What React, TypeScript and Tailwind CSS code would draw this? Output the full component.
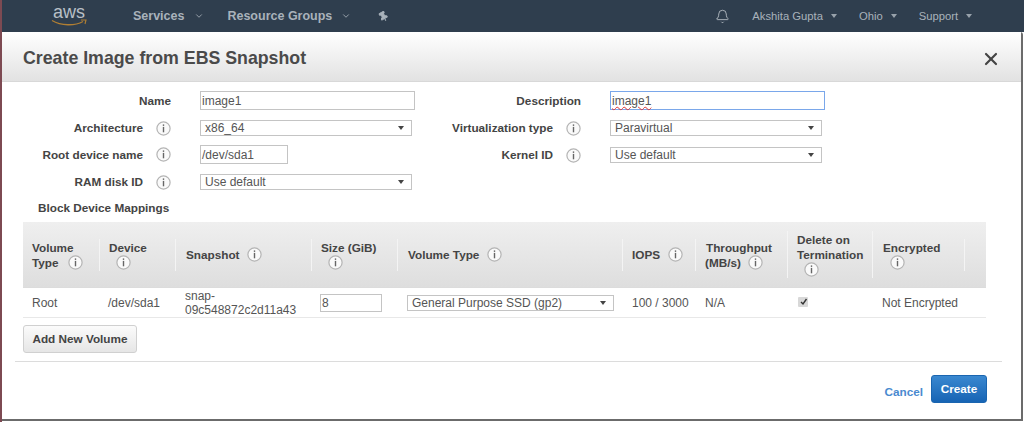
import { ChevronDown, Bell, X, Pin } from 'lucide-react'

const FONT = "font-['Liberation_Sans',Arial,sans-serif]"
const COLS = 'grid-cols-[77px_76px_136px_86px_225px_73px_92px_85px_92px_21px]'

function InfoIcon({ className = '' }: { className?: string }) {
  return (
    <svg viewBox="0 0 15 15" className={`h-[15px] w-[15px] shrink-0 ${className}`}>
      <circle cx="7.5" cy="7.5" r="6.6" fill="#fafafa" stroke="#b4b4b4" strokeWidth="1.2" />
      <rect x="6.8" y="3.4" width="1.4" height="1.5" fill="#666" />
      <rect x="6.8" y="5.9" width="1.4" height="5.4" fill="#666" />
    </svg>
  )
}

function Caret({ color = 'border-t-[#444]' }: { color?: string }) {
  return <span className={`h-0 w-0 border-x-[3px] border-t-[4px] border-x-transparent ${color}`} />
}

function SelectBox({ value, className = '' }: { value: string; className?: string }) {
  return (
    <div className={`flex h-[16px] items-center justify-between border border-[#c4c4c4] bg-white pl-1 pr-[7px] text-[12px] text-[#555] ${className}`}>
      <span>{value}</span>
      <Caret />
    </div>
  )
}

function TextBox({ value, className = '' }: { value: string; className?: string }) {
  return (
    <div className={`flex h-[19px] items-center border border-[#c4c4c4] bg-white pl-[1px] text-[12px] text-[#555] ${className}`}>
      {value}
    </div>
  )
}

function NavItem({ label, className = '' }: { label: string; className?: string }) {
  return (
    <div className={`flex items-center gap-[8px] text-[11.25px] text-[#a9b2bb] ${className}`}>
      <span>{label}</span>
      <Caret color="border-t-[#98a2ab]" />
    </div>
  )
}

function FormRow({ label, info = true, labelWidth, children, className = '' }: {
  label: string
  info?: boolean
  labelWidth: string
  children: React.ReactNode
  className?: string
}) {
  return (
    <div className={`flex items-center ${className}`}>
      <div className={`whitespace-nowrap text-right text-[11.75px] font-bold leading-[16px] text-[#444] ${labelWidth}`}>{label}</div>
      {info ? (
        <div className="flex h-[15px] w-[57px] pl-[13px]">
          <InfoIcon />
        </div>
      ) : (
        <div className="w-[29px]" />
      )}
      {children}
    </div>
  )
}

function HeadCell({ children, tall = false, last = false }: { children: React.ReactNode; tall?: boolean; last?: boolean }) {
  return (
    <div className={`flex flex-col justify-center px-[9px] text-[11.75px] font-bold leading-[15px] text-[#444] ${tall ? 'h-[47px]' : 'h-[32px]'} ${last ? '' : 'border-r border-[#f4f4f4]'}`}>
      {children}
    </div>
  )
}

export default function App() {
  return (
    <div className={`h-[422px] w-[1024px] overflow-hidden border-l-2 border-[#7d4a52] bg-white ${FONT}`}>
      {/* top nav */}
      <div className="flex h-[32px] items-center bg-[#2f3e4e] text-[#a9b2bb]">
        <div className="ml-[49px] flex w-[36px] flex-col items-center">
          <div className="-mt-[1px] text-[18px] leading-[14px] text-[#b9c0c7]">aws</div>
          <svg viewBox="0 0 36 8" className="h-[8px] w-[36px]">
            <path d="M1 1.5 C10 7 24 7 32 2.5" fill="none" stroke="#b17f33" strokeWidth="1.3" />
            <path d="M30 1 L35 1 L34 5" fill="none" stroke="#b17f33" strokeWidth="1.1" />
          </svg>
        </div>
        <div className="ml-[46px] flex items-center gap-[10px] text-[12.5px] font-bold">
          <span>Services</span>
          <ChevronDown size={10} strokeWidth={2} />
        </div>
        <div className="ml-[23px] flex items-center gap-[9px] text-[12.5px] font-bold">
          <span>Resource Groups</span>
          <ChevronDown size={10} strokeWidth={2} />
        </div>
        <Pin size={11} strokeWidth={2} fill="#a9b2bb" className="ml-[27px] rotate-[-30deg]" />
        <Bell size={15} strokeWidth={1.3} className="ml-[326px] text-[#c2c8ce]" />
        <NavItem label="Akshita Gupta" className="ml-[22px]" />
        <NavItem label="Ohio" className="ml-[22px]" />
        <NavItem label="Support" className="ml-[22px]" />
      </div>

      {/* dialog */}
      <div className="mr-[1px] h-[389px] rounded-t-[3px] border-b-2 border-r-2 border-[#6b6b6b] bg-white">
        <div className="flex h-[50px] items-center justify-between border-b border-[#d8d8d8] bg-gradient-to-b from-white to-[#e2e2e2] pl-[21px] pr-[20px] pt-[4px]">
          <h1 className="text-[17.75px] font-bold text-[#4a4a4a]">Create Image from EBS Snapshot</h1>
          <X size={20} strokeWidth={2.6} className="text-[#444]" />
        </div>

        <div className="flex pt-[9px]">
          {/* left column */}
          <div className="w-[449px] shrink-0">
            <FormRow label="Name" info={false} labelWidth="w-[169px]">
              <TextBox value="image1" className="w-[215px]" />
            </FormRow>
            <FormRow label="Architecture" labelWidth="w-[141px]" className="mt-[10px]">
              <SelectBox value="x86_64" className="w-[212px]" />
            </FormRow>
            <FormRow label="Root device name" labelWidth="w-[141px]" className="mt-[9px]">
              <TextBox value="/dev/sda1" className="w-[88px]" />
            </FormRow>
            <FormRow label="RAM disk ID" labelWidth="w-[141px]" className="mt-[10px]">
              <SelectBox value="Use default" className="w-[212px]" />
            </FormRow>
          </div>
          {/* right column */}
          <div className="flex-1">
            <FormRow label="Description" info={false} labelWidth="w-[130px]">
              <div className="flex h-[19px] w-[215px] items-center border border-[#7aa7ea] bg-white pl-[1px] text-[12px] text-[#555] underline decoration-[#d33] decoration-wavy decoration-1">
                image1
              </div>
            </FormRow>
            <FormRow label="Virtualization type" labelWidth="w-[102px]" className="mt-[10px]">
              <SelectBox value="Paravirtual" className="w-[212px]" />
            </FormRow>
            <FormRow label="Kernel ID" labelWidth="w-[102px]" className="mt-[11px]">
              <SelectBox value="Use default" className="w-[212px]" />
            </FormRow>
          </div>
        </div>

        <div className="ml-[36px] mt-[11px] text-[11.75px] font-bold leading-[14px] text-[#444]">Block Device Mappings</div>

        {/* mapping table */}
        <div className="ml-[21px] mt-[7px] w-[963px]">
          <div className={`grid h-[66px] ${COLS} items-center border-b border-[#dcdcdc] bg-gradient-to-b from-[#efefef] to-[#dedede]`}>
            <HeadCell>
              <span>Volume</span>
              <span className="flex items-center gap-[9px]">Type <InfoIcon /></span>
            </HeadCell>
            <HeadCell>
              <span>Device</span>
              <InfoIcon className="ml-[7px]" />
            </HeadCell>
            <HeadCell>
              <span className="flex items-center gap-[7px] pl-[1px]">Snapshot <InfoIcon /></span>
            </HeadCell>
            <HeadCell>
              <span>Size (GiB)</span>
              <InfoIcon className="ml-[7px]" />
            </HeadCell>
            <HeadCell>
              <span className="flex items-center gap-[8px] pl-[1px]">Volume Type <InfoIcon /></span>
            </HeadCell>
            <HeadCell>
              <span className="flex items-center gap-[8px]">IOPS <InfoIcon /></span>
            </HeadCell>
            <HeadCell tall>
              <span className="pl-[1px]">Throughput</span>
              <span className="flex items-center gap-[7px]">(MB/s) <InfoIcon /></span>
            </HeadCell>
            <HeadCell tall>
              <span>Delete on</span>
              <span>Termination</span>
              <InfoIcon className="ml-[7px]" />
            </HeadCell>
            <HeadCell>
              <span className="pl-[1px]">Encrypted</span>
              <InfoIcon className="ml-[8px]" />
            </HeadCell>
            <div />
          </div>
          <div className={`grid h-[30px] ${COLS} items-center border-b border-[#e8e8e8] text-[12px] text-[#555]`}>
            <div className="pl-[9px]">Root</div>
            <div className="pl-[8px]">/dev/sda1</div>
            <div className="pl-[9px] leading-[14px]">snap-<br />09c548872c2d11a43</div>
            <div className="pl-[8px]">
              <div className="flex h-[18px] w-[62px] items-center border border-[#c4c4c4] bg-white pl-[1px]">8</div>
            </div>
            <div className="pl-[9px]">
              <SelectBox value="General Purpose SSD (gp2)" className="w-[207px]" />
            </div>
            <div className="pl-[9px]">100 / 3000</div>
            <div className="pl-[9px]">N/A</div>
            <div className="pl-[10px]">
              <div className="-mt-[2px] flex h-[10px] w-[10px] items-center justify-center rounded-[1px] bg-[#d8d8d8]">
                <svg viewBox="0 0 9 9" className="h-[9px] w-[9px]"><path d="M2 5 L4 7 L7.5 2" fill="none" stroke="#333" strokeWidth="1.4" /></svg>
              </div>
            </div>
            <div className="col-span-2 pl-[9px]">Not Encrypted</div>
          </div>

          <button className="mt-[7px] h-[28px] w-[114px] rounded-[3px] border border-[#d0d0d0] bg-gradient-to-b from-[#fbfbfb] to-[#e6e6e6] text-[11.75px] font-bold text-[#444]">
            Add New Volume
          </button>
        </div>

        <div className="ml-[13px] mt-[8px] w-[987px] border-t border-[#dcdcdc]" />

        <div className="mr-[34px] mt-[13px] flex items-center justify-end">
          <a className="mr-[8px] mt-[6px] text-[11.75px] font-bold text-[#4a8ad0]">Cancel</a>
          <button className="h-[28px] w-[56px] rounded-[3px] border border-[#1a65b0] bg-gradient-to-b from-[#3a88d0] to-[#1664b4] text-[11.75px] font-bold text-white">
            Create
          </button>
        </div>
      </div>
    </div>
  )
}
